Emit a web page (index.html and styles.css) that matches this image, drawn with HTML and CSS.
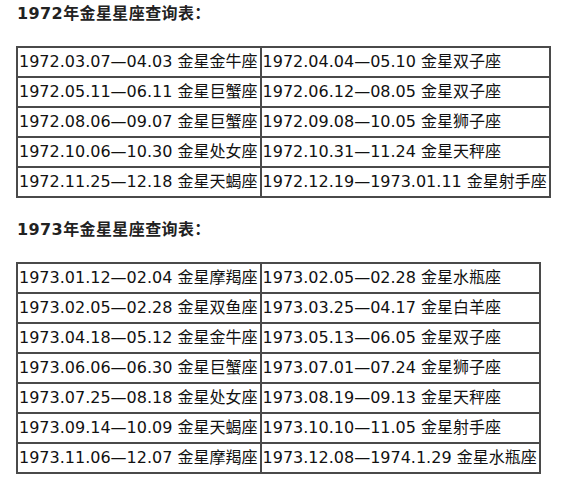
FILE: index.html
```html
<!DOCTYPE html>
<html lang="zh-CN">
<head>
<meta charset="utf-8">
<title>金星星座查询表</title>
<link rel="stylesheet" href="styles.css">
</head>
<body>
<div class="page">
  <p class="title">1972年金星星座查询表：</p>
  <table class="venus">
    <tr><td>1972.03.07—04.03 金星金牛座</td><td>1972.04.04—05.10 金星双子座</td></tr>
    <tr><td>1972.05.11—06.11 金星巨蟹座</td><td>1972.06.12—08.05 金星双子座</td></tr>
    <tr><td>1972.08.06—09.07 金星巨蟹座</td><td>1972.09.08—10.05 金星狮子座</td></tr>
    <tr><td>1972.10.06—10.30 金星处女座</td><td>1972.10.31—11.24 金星天秤座</td></tr>
    <tr><td>1972.11.25—12.18 金星天蝎座</td><td>1972.12.19—1973.01.11 金星射手座</td></tr>
  </table>
  <p class="title">1973年金星星座查询表：</p>
  <table class="venus">
    <tr><td>1973.01.12—02.04 金星摩羯座</td><td>1973.02.05—02.28 金星水瓶座</td></tr>
    <tr><td>1973.02.05—02.28 金星双鱼座</td><td>1973.03.25—04.17 金星白羊座</td></tr>
    <tr><td>1973.04.18—05.12 金星金牛座</td><td>1973.05.13—06.05 金星双子座</td></tr>
    <tr><td>1973.06.06—06.30 金星巨蟹座</td><td>1973.07.01—07.24 金星狮子座</td></tr>
    <tr><td>1973.07.25—08.18 金星处女座</td><td>1973.08.19—09.13 金星天秤座</td></tr>
    <tr><td>1973.09.14—10.09 金星天蝎座</td><td>1973.10.10—11.05 金星射手座</td></tr>
    <tr><td>1973.11.06—12.07 金星摩羯座</td><td>1973.12.08—1974.1.29 金星水瓶座</td></tr>
  </table>
</div>
</body>
</html>
```
FILE: styles.css
```css
html, body {
  margin: 0;
  padding: 0;
  background: #fff;
}
.page {
  padding: 0 16px;
  font-family: "DejaVu Sans", "Noto Sans CJK SC", sans-serif;
  color: #111;
}
.title {
  margin: 0 0 19px 1px;
  padding-top: 1px;
  font-size: 16px;
  font-weight: bold;
  line-height: 26px;
  letter-spacing: 0.4px;
  color: #222;
}
.venus {
  border-collapse: collapse;
  border: 2px solid #4a4a4a;
  margin-bottom: 18px;
  font-size: 16px;
}
.venus td {
  border: 2px solid #4a4a4a;
  padding: 4px 2px 4px 1px;
  line-height: 20px;
  white-space: nowrap;
}
```
